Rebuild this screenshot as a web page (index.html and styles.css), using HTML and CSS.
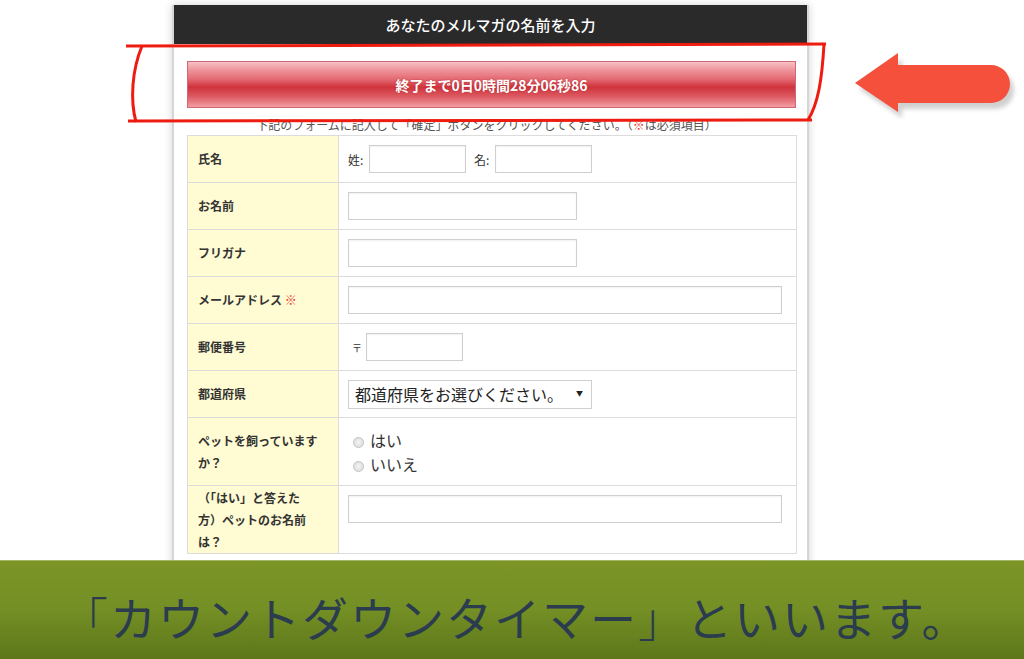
FILE: index.html
```html
<!DOCTYPE html>
<html lang="ja">
<head>
    <meta charset="UTF-8">
    <meta name="viewport" content="width=device-width, initial-scale=1.0">
    <title>あなたのメルマガの名前を入力</title>
    <link rel="stylesheet" href="styles.css">
</head>
<body>
    <div class="page">
        <div class="card">
            <h1 class="card-title">あなたのメルマガの名前を入力</h1>
            <div class="card-body">
                <div class="timer">終了まで0日0時間28分06秒86</div>
                <p class="note">下記のフォームに記入して「確定」ボタンをクリックしてください。（<span class="req">※</span>は必須項目）</p>
                <table class="form-table">
                    <tr>
                        <th>氏名</th>
                        <td>
                            <span class="pre">姓:</span><input type="text" class="field short">
                            <span class="pre pre-gap">名:</span><input type="text" class="field short">
                        </td>
                    </tr>
                    <tr>
                        <th>お名前</th>
                        <td><input type="text" class="field mid"></td>
                    </tr>
                    <tr>
                        <th>フリガナ</th>
                        <td><input type="text" class="field mid"></td>
                    </tr>
                    <tr>
                        <th>メールアドレス <span class="req">※</span></th>
                        <td><input type="text" class="field long"></td>
                    </tr>
                    <tr>
                        <th>郵便番号</th>
                        <td><span class="pre zip">〒</span><input type="text" class="field short"></td>
                    </tr>
                    <tr>
                        <th>都道府県</th>
                        <td>
                            <div class="select">都道府県をお選びください。<span class="caret">▼</span></div>
                        </td>
                    </tr>
                    <tr class="tall">
                        <th>ペットを飼っています<br>か？</th>
                        <td>
                            <label class="radio"><span class="dot"></span>はい</label>
                            <label class="radio"><span class="dot"></span>いいえ</label>
                        </td>
                    </tr>
                    <tr class="tall">
                        <th>（「はい」と答えた<br>方）ペットのお名前<br>は？</th>
                        <td class="top"><input type="text" class="field long"></td>
                    </tr>
                </table>
            </div>
        </div>
    </div>

    <!-- hand-drawn annotation over the timer -->
    <svg class="markup" width="1024" height="140" viewBox="0 0 1024 140">
        <path d="M126 46 L826 44" stroke="#ee1c10" stroke-width="3" fill="none"/>
        <path d="M128 121 L812 120" stroke="#ee1c10" stroke-width="3" fill="none"/>
        <path d="M142 46 C132 70 130 100 136 122" stroke="#ee1c10" stroke-width="3" fill="none"/>
        <path d="M824 44 C822 80 818 104 808 120" stroke="#ee1c10" stroke-width="3" fill="none"/>
    </svg>

    <svg class="arrow" width="169" height="80" viewBox="0 0 169 80">
        <defs>
            <filter id="soft" x="-10%" y="-20%" width="120%" height="140%">
                <feGaussianBlur stdDeviation="2"/>
            </filter>
        </defs>
        <path d="M2 35 L45 5 L45 17 L138 17 A19 19 0 0 1 138 55 L45 55 L45 64 Z" fill="#999" opacity="0.45" filter="url(#soft)" transform="translate(2 3)"/>
        <path d="M0 32 L43 2 L43 14 L136 14 A19 19 0 0 1 136 52 L43 52 L43 61 Z" fill="#f4503c"/>
    </svg>

    <div class="caption"><span class="bracket">「</span>カウントダウンタイマー<span class="bracket">」</span>といいます。</div>
</body>
</html>
```

FILE: styles.css
```css
* {
    margin: 0;
    padding: 0;
    box-sizing: border-box;
}
body {
    background: #fff;
    font-family: "Noto Sans CJK JP", "Noto Sans", sans-serif;
    color: #333;
    height: 659px;
    overflow: hidden;
}
.page {
    padding-top: 5px;
    padding-left: 172px;
}
.card {
    width: 637px;
    background: #fff;
    border-left: 2px solid #d6d6d6;
    border-right: 2px solid #d6d6d6;
    box-shadow: 0 0 8px rgba(0, 0, 0, 0.18);
    height: 620px;
}
.card-title {
    background: #2a2a2a;
    color: #fff;
    font-size: 15px;
    font-weight: 500;
    text-align: center;
    height: 39px;
    line-height: 39px;
}
.card-body {
    padding: 17px 11px 0 13px;
}
.timer {
    height: 47px;
    line-height: 46px;
    text-align: center;
    color: #fff;
    font-size: 14px;
    font-weight: 700;
    border: 1px solid #cc6878;
    background: linear-gradient(#f8c2c6 0%, #ef9aa1 15%, #e46a73 38%, #d0333c 56%, #dc5860 76%, #f39ca3 100%);
    text-shadow: 0 0 2px rgba(120, 0, 0, 0.35);
}
.note {
    font-size: 12px;
    color: #555;
    text-align: center;
    height: 27px;
    line-height: 24px;
    padding-top: 5px;
    margin-right: 10px;
}
.req {
    color: #e8322c;
}
.form-table {
    width: 610px;
    border-collapse: collapse;
}
.form-table th, .form-table td {
    border: 1px solid #dcdcdc;
    height: 47px;
}
.form-table th {
    width: 152px;
    background: #fffbd2;
    font-size: 12px;
    font-weight: 700;
    text-align: left;
    padding: 0 10px;
    line-height: 22px;
}
.form-table td {
    padding: 0 14px 0 9px;
    font-size: 12px;
}
.form-table tr.tall th, .form-table tr.tall td {
    height: 68px;
}
.form-table td.top {
    vertical-align: top;
    padding-top: 9px;
}
.pre {
    vertical-align: middle;
    margin-right: 6px;
}
.pre-gap {
    margin-left: 5px;
}
.zip {
    margin-left: 4px;
    margin-right: 4px;
    font-size: 10px;
}
.field {
    height: 28px;
    border: 1px solid #cfcfcf;
    box-shadow: inset 0 1px 2px rgba(0, 0, 0, 0.06);
    vertical-align: middle;
    background: #fff;
}
.field.short {
    width: 97px;
}
.field.mid {
    width: 229px;
}
.field.long {
    width: 434px;
}
.select {
    width: 244px;
    height: 29px;
    line-height: 27px;
    border: 1px solid #cfcfcf;
    font-size: 16px;
    color: #222;
    padding-left: 6px;
    display: flex;
    justify-content: space-between;
}
.caret {
    font-size: 7px;
    padding-right: 8px;
    line-height: 24px;
}
.radio {
    display: flex;
    align-items: center;
    font-size: 16px;
    color: #333;
    height: 24px;
}
.dot {
    width: 11px;
    height: 11px;
    border-radius: 50%;
    border: 1px solid #c4c4c4;
    background: radial-gradient(#f4f4f4, #d8d8d8);
    margin: 5px 6px 0 5px;
}
.markup {
    position: absolute;
    left: 0;
    top: 0;
}
.arrow {
    position: absolute;
    left: 855px;
    top: 51px;
}
.caption {
    position: absolute;
    left: 0;
    bottom: 0;
    width: 1024px;
    height: 99px;
    background: linear-gradient(#7b9527 0%, #748f24 50%, #5c771a 100%);
    border-top: 1px solid #a3b567;
    color: #2b3c4e;
    font-size: 46px;
    font-weight: 400;
    line-height: 99px;
    padding-top: 6px;
    padding-left: 62px;
    letter-spacing: 2px;
}
.bracket {
    font-weight: 300;
}
```
